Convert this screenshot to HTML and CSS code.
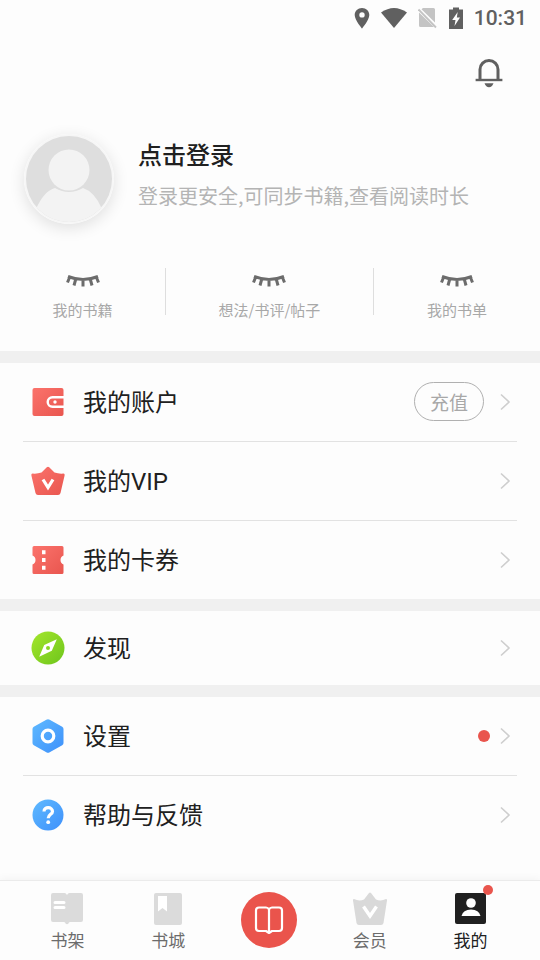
FILE: index.html
```html
<!DOCTYPE html>
<html lang="zh-CN">
<head>
<meta charset="utf-8">
<meta name="viewport" content="width=device-width, initial-scale=1">
<title>我的</title>
<link rel="stylesheet" href="styles.css">
</head>
<body>
<svg class="defs" width="0" height="0" aria-hidden="true">
  <defs>
    <linearGradient id="red" x1="0" y1="0" x2="1" y2="1"><stop offset="0" stop-color="#fb736c"/><stop offset="1" stop-color="#e9564f"/></linearGradient>
    <linearGradient id="green" x1="0" y1="0" x2="1" y2="1"><stop offset="0" stop-color="#a4e62c"/><stop offset="1" stop-color="#6ec51c"/></linearGradient>
    <linearGradient id="blue" x1="0" y1="0" x2="1" y2="1"><stop offset="0" stop-color="#5fbaff"/><stop offset="1" stop-color="#3e90fb"/></linearGradient>
    <symbol id="lashes" viewBox="0 0 36 16">
      <path d="M3 2.500Q18 8.500 33 2.500M4.500 3.500L2.500 8.500M10.500 6L9 11.500M18 6.500V12.500M25.500 6L27 11.500M31.500 3.500L33.500 8.500" fill="none" stroke="#6c6c6c" stroke-width="3"/>
    </symbol>
    <symbol id="chevron" viewBox="0 0 12 18">
      <path d="M2 1.500L10 9L2 16.500" fill="none" stroke="#cecece" stroke-width="1.600"/>
    </symbol>
  </defs>
</svg>

<div class="status">
  <svg width="16" height="22" viewBox="0 0 16 22"><path fill-rule="evenodd" d="M8 1C3.900 1 .7 4 .7 8C.7 13.200 8 21.500 8 21.500S15.300 13.200 15.300 8C15.300 4 12.100 1 8 1ZM8 5.200A2.700 2.700 0 1 1 8 10.600A2.700 2.700 0 1 1 8 5.200Z" fill="#606060"/></svg>
  <svg width="26" height="22" viewBox="0 0 26 22"><path d="M0 5.500Q13-3.500 26 5.500L13 21Z" fill="#606060"/></svg>
  <svg width="20" height="22" viewBox="0 0 20 22"><path d="M5 1H15.500Q17 1 17 2.500V15.500L3.500 2.300ZM1 5.500L16 20H2.500Q1 20 1 18.500Z" fill="#c4c4c4"/><path d="M.5 2.500L18 20.500" stroke="#c4c4c4" stroke-width="1.800"/></svg>
  <svg width="14" height="22" viewBox="0 0 14 22"><path d="M0 2.500H4V.5H10V2.500H14V22H0Z" fill="#606060"/><path d="M8.700 5L3.200 13H6.500L5.500 19L11 10.500H7.800Z" fill="#fdfdfd"/></svg>
  <span class="clock">10:31</span>
</div>

<header class="top">
  <button class="bell" type="button" aria-label="消息">
    <svg width="28" height="30" viewBox="0 0 28 30"><path d="M5 22V11.500A9 9 0 0 1 23 11.500V22" fill="none" stroke="#606060" stroke-width="3"/><path d="M.6 22H27.400" stroke="#606060" stroke-width="2.400"/><path d="M9.500 25.200H18.500Q17 29.200 14 29.200Q11 29.200 9.500 25.200Z" fill="#606060"/></svg>
  </button>
</header>

<main>
  <a class="profile" href="#login">
    <svg class="avatar" width="90" height="90" viewBox="0 0 90 90"><defs><clipPath id="disc"><circle cx="45" cy="45" r="43"/></clipPath></defs><circle cx="45" cy="45" r="45" fill="#f6f6f6"/><circle cx="45" cy="45" r="43" fill="#dedede"/><g clip-path="url(#disc)" fill="#f3f3f3"><circle cx="45" cy="36" r="20.500"/><path d="M12 75Q20 57 31 54Q45 62 59 54Q71 58 78 75V90H12Z"/></g></svg>
    <span class="who">
      <strong>点击登录</strong>
      <span class="hint">登录更安全,可同步书籍,查看阅读时长</span>
    </span>
  </a>

  <nav class="stats" aria-label="统计">
    <a href="#books"><svg width="36" height="16"><use href="#lashes"/></svg><span>我的书籍</span></a>
    <a href="#posts"><svg width="36" height="16"><use href="#lashes"/></svg><span>想法/书评/帖子</span></a>
    <a href="#lists"><svg width="36" height="16"><use href="#lashes"/></svg><span>我的书单</span></a>
  </nav>

  <section class="group">
    <div class="row">
      <svg width="34" height="34" viewBox="0 0 34 34"><rect x="1.500" y="3" width="31" height="28" rx="2" fill="url(#red)"/><path d="M33 12.200H21.500A4.800 4.800 0 0 0 21.500 21.800H33" fill="none" stroke="#fff" stroke-width="2.400"/><circle cx="24" cy="17" r="1.700" fill="#fff"/></svg>
      <a class="label" href="#account">我的账户</a>
      <button class="pill" type="button">充值</button>
      <svg class="go" width="12" height="18"><use href="#chevron"/></svg>
    </div>
    <div class="row">
      <svg width="34" height="34" viewBox="0 0 34 34"><path d="M1.500 9.500Q6 10 10.500 8.500L15.800 3.300Q17 2 18.200 3.300L23.500 8.500Q28 10 32.500 9.500Q34 9.700 33.600 11.500L29.500 29Q29 31 27 31H7Q5 31 4.500 29L.4 11.500Q0 9.700 1.500 9.500Z" fill="url(#red)"/><path d="M12 15.500L17 23.500L22 15.500" fill="none" stroke="#fff" stroke-width="3.200"/></svg>
      <a class="label" href="#vip">我的VIP</a>
      <svg class="go" width="12" height="18"><use href="#chevron"/></svg>
    </div>
    <div class="row">
      <svg width="34" height="34" viewBox="0 0 34 34"><path d="M3 3H31Q32.500 3 32.500 4.500V12.500C28.500 14 28.500 20 32.500 21.500V29.500Q32.500 31 31 31H3Q1.500 31 1.500 29.500V21.500C5.500 20 5.500 14 1.500 12.500V4.500Q1.500 3 3 3Z" fill="url(#red)"/><path d="M11 7.300H14.500V11.300H11ZM11 15H14.500V19H11ZM11 22.700H14.500V26.700H11Z" fill="#fff"/></svg>
      <a class="label" href="#coupons">我的卡券</a>
      <svg class="go" width="12" height="18"><use href="#chevron"/></svg>
    </div>
  </section>

  <section class="group compact">
    <div class="row">
      <svg width="34" height="34" viewBox="0 0 34 34"><circle cx="17" cy="17" r="16.500" fill="url(#green)"/><path fill-rule="evenodd" d="M25.800 8.200L20.800 19.800L8.200 25.800L13.200 14Z M17 15A2 2 0 1 0 17 19A2 2 0 1 0 17 15Z" fill="#fff"/></svg>
      <a class="label" href="#discover">发现</a>
      <svg class="go" width="12" height="18"><use href="#chevron"/></svg>
    </div>
  </section>

  <section class="group">
    <div class="row">
      <svg width="34" height="34" viewBox="0 0 34 34"><path d="M15.300 .8Q17-.4 18.700 .8L31.200 7.800Q32.500 8.500 32.500 10V24Q32.500 25.500 31.200 26.200L18.700 33.200Q17 34.400 15.300 33.200L2.800 26.200Q1.500 25.500 1.500 24V10Q1.500 8.500 2.800 7.800Z" fill="url(#blue)"/><circle cx="17" cy="17" r="5.800" fill="none" stroke="#fff" stroke-width="3.200"/></svg>
      <a class="label" href="#settings">设置</a>
      <span class="dot"></span>
      <svg class="go" width="12" height="18"><use href="#chevron"/></svg>
    </div>
    <div class="row">
      <svg width="34" height="34" viewBox="0 0 34 34"><circle cx="17" cy="17" r="15.500" fill="url(#blue)"/><path d="M13 13.500C13 8.200 21.500 8.600 21.500 13.400C21.500 16.400 17.200 16.400 17.200 20.300" fill="none" stroke="#fff" stroke-width="3.200"/><circle cx="17.200" cy="24.200" r="1.900" fill="#fff"/></svg>
      <a class="label" href="#help">帮助与反馈</a>
      <svg class="go" width="12" height="18"><use href="#chevron"/></svg>
    </div>
  </section>
</main>

<nav class="tabs" aria-label="主导航">
  <a href="#shelf">
    <svg width="34" height="34" viewBox="0 0 34 34"><path d="M3 1H14.500Q16 1 17 3Q18 1 19.500 1H31Q33 1 33 3V28Q33 30 31 30H20Q18.500 30 18.500 31.500Q17 33 15.500 31.500Q15.500 30 14 30H3Q1 30 1 28V3Q1 1 3 1Z" fill="#dbdbdb"/><path d="M5 10.500H14M5 15.500H14" stroke="#fff" stroke-width="3" stroke-linecap="round"/></svg>
    <span>书架</span>
  </a>
  <a href="#store">
    <svg width="34" height="34" viewBox="0 0 34 34"><rect x="3" y="1" width="28" height="32" rx="2" fill="#dbdbdb"/><path d="M7 4H16V19.500L11.500 16L7 19.500Z" fill="#fff"/></svg>
    <span>书城</span>
  </a>
  <a class="read" href="#read" aria-label="阅读">
    <svg width="56" height="56" viewBox="0 0 56 56"><circle cx="28" cy="28" r="28" fill="#ea544c"/><path d="M28 18V41M18 15.500H25Q27 15.500 28 17.500Q29 15.500 31 15.500H38Q41 15.500 41 18.500V36Q41 39 38 39H31L28 41L25 39H18Q15 39 15 36V18.500Q15 15.500 18 15.500Z" fill="none" stroke="#fff" stroke-width="2.200" stroke-linejoin="round"/></svg>
  </a>
  <a href="#member">
    <svg width="34" height="34" viewBox="0 0 34 34"><path d="M1 7Q6 9.500 11 7.500L16 1Q17 0 18 1L23 7.500Q28 9.500 33 7Q34.300 7 34 8.500L30.500 31Q30 33 28 33H6Q4 33 3.500 31L0 8.500Q-.3 7 1 7Z" fill="#d9d9d9"/><path d="M10.500 14.500L17 24L23.500 14.500" fill="none" stroke="#fff" stroke-width="3.400"/></svg>
    <span>会员</span>
  </a>
  <a class="active" href="#me" aria-current="page">
    <svg width="34" height="34" viewBox="0 0 34 34"><rect x="1" y="1" width="31" height="31" rx="2" fill="#202020"/><circle cx="17" cy="11" r="4.800" fill="#fff"/><path d="M7.500 24Q9 17.500 17 17.500T26.500 24Z" fill="#fff"/></svg>
    <span>我的</span>
    <i class="badge"></i>
  </a>
</nav>
</body>
</html>
```
FILE: styles.css
```css
* {
  box-sizing: border-box;
}

body {
  margin: 0;
  min-height: 100vh;
  display: flex;
  flex-direction: column;
  background: #fdfdfd;
  color: #202020;
  font-family: "Noto Sans CJK SC", Roboto, sans-serif;
}

a {
  color: inherit;
  text-decoration: none;
}

button {
  padding: 0;
  background: none;
  border: 0;
  font: inherit;
}

svg {
  display: block;
  flex: none;
}

.defs {
  position: absolute;
}

.status {
  display: flex;
  align-items: center;
  justify-content: flex-end;
  gap: 11px;
  height: 36px;
  padding-right: 13px;
}

.clock {
  color: #606060;
  font: 500 21px/24px Roboto, sans-serif;
}

.top {
  display: flex;
  justify-content: flex-end;
  padding: 22px 37px 0 0;
}

.profile {
  display: flex;
  align-items: center;
  gap: 24px;
  padding: 46px 24px 0;
}

.avatar {
  border-radius: 50%;
  box-shadow: 0 4px 16px rgba(0, 0, 0, 0.12);
}

.who {
  display: flex;
  flex-direction: column;
  gap: 8px;
  padding-bottom: 10px;
}

.who strong {
  font-size: 24px;
  font-weight: 500;
  line-height: 36px;
}

.hint {
  color: #b4b4b4;
  font-size: 20px;
  line-height: 32px;
}

.stats {
  display: grid;
  grid-template-columns: 4fr 5fr 4fr;
  padding: 44px 0 36px;
}

.stats a {
  display: flex;
  flex-direction: column;
  align-items: center;
  gap: 8px;
  height: 47px;
  padding-top: 6px;
  border-right: 1px solid #dedede;
  color: #a8a8a8;
  font-size: 15px;
  line-height: 24px;
}

.stats a:last-child {
  border-right: 0;
}

.group {
  padding: 0 23px;
  border-top: 12px solid #f0f0f0;
}

.row {
  display: flex;
  align-items: center;
  height: 79px;
  padding: 0 6px 1px 8px;
  border-bottom: 1px solid #e2e2e2;
}

.row:last-child {
  height: 78px;
  border-bottom: 0;
}

.compact .row:last-child {
  height: 74px;
}

.label {
  flex: 1;
  margin-left: 18px;
  padding-top: 3px;
  font-family: Roboto, "Noto Sans CJK SC", sans-serif;
  font-size: 24px;
  line-height: 36px;
}

.pill {
  width: 70px;
  height: 39px;
  border: 1px solid #b0b0b0;
  border-radius: 20px;
  color: #a8a8a8;
  font-size: 19px;
  line-height: 36px;
}

.go {
  margin-left: 15px;
}

.dot {
  width: 12px;
  height: 12px;
  border-radius: 50%;
  background: #e9554d;
}

.dot + .go {
  margin-left: 9px;
}

.tabs {
  position: sticky;
  bottom: 0;
  display: grid;
  grid-template-columns: repeat(5, 1fr);
  height: 80px;
  margin-top: auto;
  padding: 11px 19px 0 17px;
  border-top: 1px solid #ebebeb;
  background: #fdfdfd;
  box-shadow: 0 -2px 8px rgba(0, 0, 0, 0.04);
}

.tabs a {
  position: relative;
  display: flex;
  flex-direction: column;
  align-items: center;
  color: #6c6c6c;
  font-size: 17px;
  line-height: 28px;
}

.tabs .active {
  color: #202020;
}

.badge {
  position: absolute;
  top: -7px;
  left: calc(50% + 12px);
  width: 10px;
  height: 10px;
  border-radius: 50%;
  background: #e9554d;
}
```
